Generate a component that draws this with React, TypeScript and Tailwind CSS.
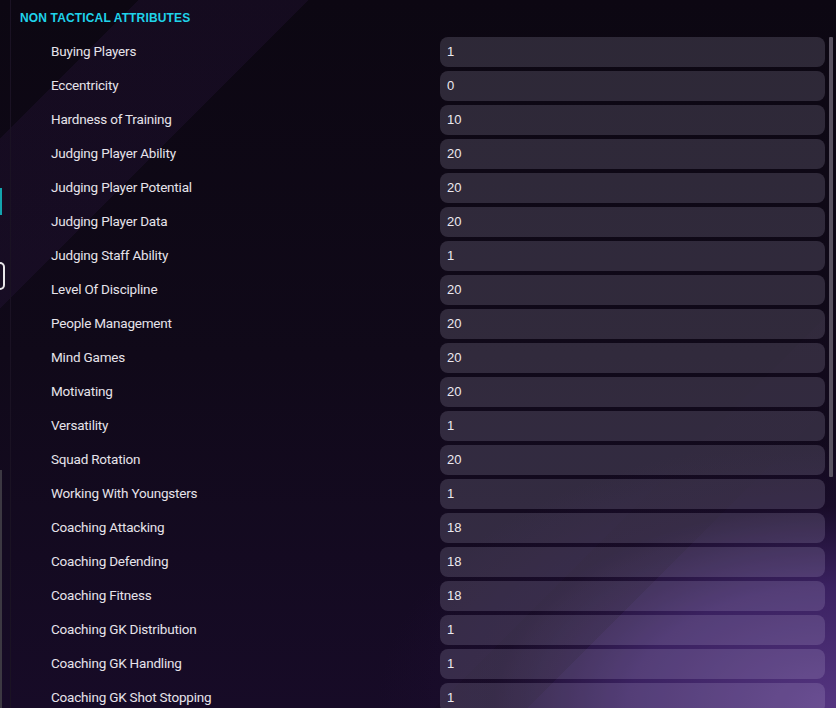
import React from "react";

const rows: [string, string][] = [
  ["Buying Players", "1"],
  ["Eccentricity", "0"],
  ["Hardness of Training", "10"],
  ["Judging Player Ability", "20"],
  ["Judging Player Potential", "20"],
  ["Judging Player Data", "20"],
  ["Judging Staff Ability", "1"],
  ["Level Of Discipline", "20"],
  ["People Management", "20"],
  ["Mind Games", "20"],
  ["Motivating", "20"],
  ["Versatility", "1"],
  ["Squad Rotation", "20"],
  ["Working With Youngsters", "1"],
  ["Coaching Attacking", "18"],
  ["Coaching Defending", "18"],
  ["Coaching Fitness", "18"],
  ["Coaching GK Distribution", "1"],
  ["Coaching GK Handling", "1"],
  ["Coaching GK Shot Stopping", "1"],
];

export default function App() {
  return (
    <div className="w-[836px] h-[708px] overflow-hidden flex bg-[#0d0713] bg-[linear-gradient(135deg,transparent_0%,transparent_9%,rgba(60,30,90,0.18)_9%,rgba(60,30,90,0.18)_20%,transparent_20%,transparent_74%,rgba(20,10,30,0.25)_74%,rgba(20,10,30,0.25)_80%,transparent_80%),radial-gradient(ellipse_55%_38%_at_100%_100%,#553581_0%,#3a2160_45%,rgba(30,14,50,0.5)_75%,transparent_100%),linear-gradient(180deg,#0c0712_0%,#100919_50%,#170b27_100%)] font-['Roboto','Liberation_Sans',sans-serif]">
      {/* left strip */}
      <div className="w-[11px] shrink-0 h-full border-r border-[#1a1223] flex flex-col">
        <div className="h-[188px] shrink-0" />
        <div className="w-[2px] h-[27px] shrink-0 bg-[#13a3ae]" />
        <div className="h-[47px] shrink-0" />
        <div className="w-[5px] h-[28px] shrink-0 border-2 border-l-0 border-[#e8e6ea] rounded-r-[5px]" />
        <div className="h-[180px] shrink-0" />
        <div className="w-[2px] flex-1 bg-[#3c3842]" />
      </div>

      {/* main */}
      <div className="flex-1 flex flex-col pl-[9px]">
        <div className="h-[37px] shrink-0 flex items-start pt-[11px]">
          <span className="text-[12px] font-bold tracking-[0.15px] text-[#1fd3ea] font-['Liberation_Sans',sans-serif] leading-[14px]">
            NON TACTICAL ATTRIBUTES
          </span>
        </div>
        <div className="flex shrink-0">
          <div className="flex flex-col gap-[4px]">
            {rows.map(([label, value]) => (
              <div key={label} className="flex items-center h-[30px] shrink-0">
                <div className="w-[420px] pl-[31px] pb-[1px] text-[13.5px] text-[#e6e3ea] tracking-[-0.2px]">
                  {label}
                </div>
                <div className="w-[385px] h-[30px] rounded-[8px] bg-[rgba(215,205,235,0.17)] flex items-center pl-[7px] text-[13px] text-[#ece9ef] font-['Liberation_Sans',sans-serif]">
                  {value}
                </div>
              </div>
            ))}
          </div>
          <div className="w-[11px] shrink-0 pl-[4px]">
            <div className="w-[4px] h-[440px] bg-[#5a5462] rounded-[1px]" />
          </div>
        </div>
      </div>
    </div>
  );
}
